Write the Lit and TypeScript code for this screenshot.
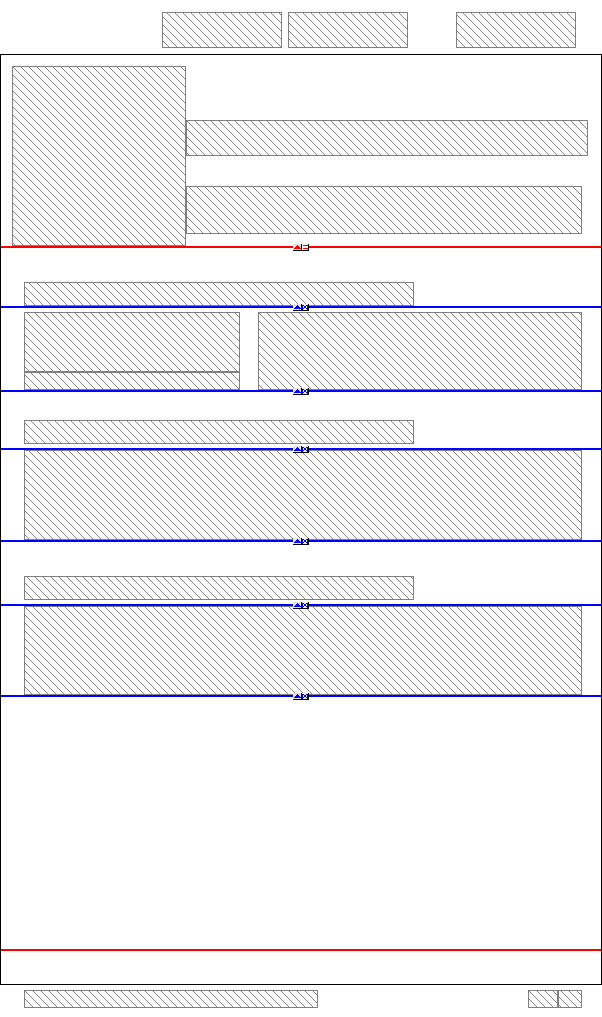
import { LitElement, html, css, svg } from "lit";
import { customElement, property } from "lit/decorators.js";

@customElement("band-line")
class BandLine extends LitElement {
  @property() kind = "field";
  @property({ type: Boolean }) marker = false;

  static styles = css`
    :host { display: block; position: relative; height: 2px; background: #00f; color: #00f; z-index: 1; }
    :host([kind="page"]) { background: #f00; color: #f00; }
    .marker { position: absolute; left: calc(50% - 8px); top: -2px; width: 16px; height: 7px; display: block; }
  `;

  render() {
    if (!this.marker) return html``;
    const glyph = this.kind === "page"
      ? svg`<path fill="currentColor" d="M10 1h5v1h-5zM10 4h5v1h-5z"/>`
      : svg`<path fill="currentColor" d="M9 1h1v5H9zM14 1h1v5h-1zM10 1h1v1h-1zM13 1h1v1h-1zM11 2h2v1h-2zM11 3h2v1h-2zM10 4h1v1h-1zM13 4h1v1h-1z"/>`;
    return html`<svg class="marker" viewBox="0 0 16 7" shape-rendering="crispEdges" aria-hidden="true">
      <rect width="16" height="7" fill="#000"/>
      <rect width="8" height="6" fill="#e4e4e4"/>
      <rect x="9" width="6" height="6" fill="#f0f0f0"/>
      <path fill="currentColor" d="M4 1h1v1h1v1h1v1h1v1H1V4h1V3h1V2h1z"/>
      ${glyph}
    </svg>`;
  }
}

@customElement("app-root")
class AppRoot extends LitElement {
  static styles = css`
    :host { display: block; background: #fff; }
    * { box-sizing: border-box; }
    /* The hatch is aligned to the page, so it runs on from one box to the next. */
    .box {
      border: 1px solid #808080;
      background-image: url("data:image/svg+xml,%3Csvg xmlns='http://www.w3.org/2000/svg' width='8' height='8' shape-rendering='crispEdges'%3E%3Cpath fill='%23808080' d='M0 0h1v1H0zM1 1h1v1H1zM2 2h1v1H2zM3 3h1v1H3zM4 4h1v1H4zM5 5h1v1H5zM6 6h1v1H6zM7 7h1v1H7z'/%3E%3C/svg%3E");
      background-position: 2px 0;
      background-attachment: fixed;
    }
    header { display: flex; justify-content: flex-end; gap: 6px; padding: 12px 26px 6px; }
    header .box { width: 120px; height: 36px; }
    header .last { margin-left: 42px; }
    main { border: 1px solid #000; }
    .band { padding: 0 19px 0 23px; }
    .intro { display: flex; padding: 11px 13px 0 11px; }
    .photo { width: 174px; height: 180px; }
    .lines { flex: 1; padding-top: 54px; }
    .name { height: 36px; margin-bottom: 30px; }
    .note { height: 48px; margin-right: 6px; }
    .title { width: 70%; max-width: 390px; height: 24px; }
    .first { padding-top: 34px; }
    .second { padding-top: 28px; padding-bottom: 4px; }
    .third { padding-top: 34px; padding-bottom: 4px; }
    .split { display: grid; grid-template-columns: 2fr 3fr; gap: 18px; padding-top: 4px; }
    .stack { display: grid; grid-template-rows: 60px 18px; }
    .body { height: 90px; }
    .clip { height: 89px; }
    .space { height: 252px; }
    .tail { height: 33px; }
    footer { display: flex; padding: 5px 20px 9px 24px; }
    footer .box { height: 18px; }
    .stamp { width: 294px; margin-right: auto; }
    .page { width: 30px; }
    .total { width: 24px; }
  `;

  render() {
    return html`
      <header>
        <div class="box"></div><div class="box"></div><div class="box last"></div>
      </header>
      <main>
        <section class="intro">
          <div class="box photo"></div>
          <div class="lines"><div class="box name"></div><div class="box note"></div></div>
        </section>
        <band-line kind="page" marker></band-line>
        <section class="band first"><div class="box title"></div></section>
        <band-line marker></band-line>
        <section class="band split">
          <div class="stack"><div class="box"></div><div class="box"></div></div>
          <div class="box"></div>
        </section>
        <band-line marker></band-line>
        <section class="band second"><div class="box title"></div></section>
        <band-line marker></band-line>
        <section class="band"><div class="box body"></div></section>
        <band-line marker></band-line>
        <section class="band third"><div class="box title"></div></section>
        <band-line marker></band-line>
        <section class="band"><div class="box clip"></div></section>
        <band-line marker></band-line>
        <div class="space"></div>
        <band-line kind="page"></band-line>
        <div class="tail"></div>
      </main>
      <footer>
        <div class="box stamp"></div><div class="box page"></div><div class="box total"></div>
      </footer>
    `;
  }
}
